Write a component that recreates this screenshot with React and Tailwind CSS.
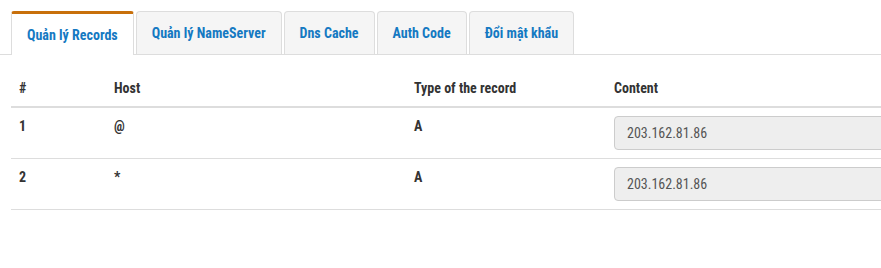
const tabs = ["Quản lý Records", "Quản lý NameServer", "Dns Cache", "Auth Code", "Đổi mật khẩu"];

const rows = [
  { n: "1", host: "@", type: "A", content: "203.162.81.86" },
  { n: "2", host: "*", type: "A", content: "203.162.81.86" },
];

export default function App() {
  return (
    <div className="w-[881px] h-[268px] overflow-hidden bg-white font-['Roboto_Condensed',_'Roboto',_sans-serif] text-[14px] text-[#333]">
      <ul className="flex gap-[2px] pl-[11px] pt-[11px] border-b border-[#ddd]">
        {tabs.map((t, i) =>
          i === 0 ? (
            <li
              key={t}
              className="-mb-px h-[44px] flex items-center px-[15px] bg-white border-t-[3px] border-x border-t-[#c8700b] border-x-[#ddd] rounded-t-[3px] font-bold text-[#1479c2] leading-5"
            >
              {t}
            </li>
          ) : (
            <li
              key={t}
              className="h-[43px] flex items-center px-[15px] bg-[#f5f5f5] border-t border-x border-[#ddd] rounded-t-[4px] font-bold text-[#1479c2] leading-5"
            >
              {t}
            </li>
          )
        )}
      </ul>
      <table className="ml-[11px] mt-[15px] w-[1100px] border-collapse leading-5">
        <thead>
          <tr className="border-b-2 border-[#ddd] text-left">
            <th className="w-[95px] p-2 font-bold">#</th>
            <th className="w-[300px] p-2 font-bold">Host</th>
            <th className="w-[200px] p-2 font-bold">Type of the record</th>
            <th className="p-2 font-bold">Content</th>
          </tr>
        </thead>
        <tbody>
          {rows.map((r) => (
            <tr key={r.n} className="border-b border-[#ddd] align-top">
              <td className="p-2 font-bold">{r.n}</td>
              <td className="p-2 font-bold">{r.host}</td>
              <td className="p-2 font-bold">{r.type}</td>
              <td className="p-2">
                <div className="h-[34px] flex items-center px-3 bg-[#eee] border border-[#ccc] rounded-[4px] text-[#555]">
                  {r.content}
                </div>
              </td>
            </tr>
          ))}
        </tbody>
      </table>
    </div>
  );
}
